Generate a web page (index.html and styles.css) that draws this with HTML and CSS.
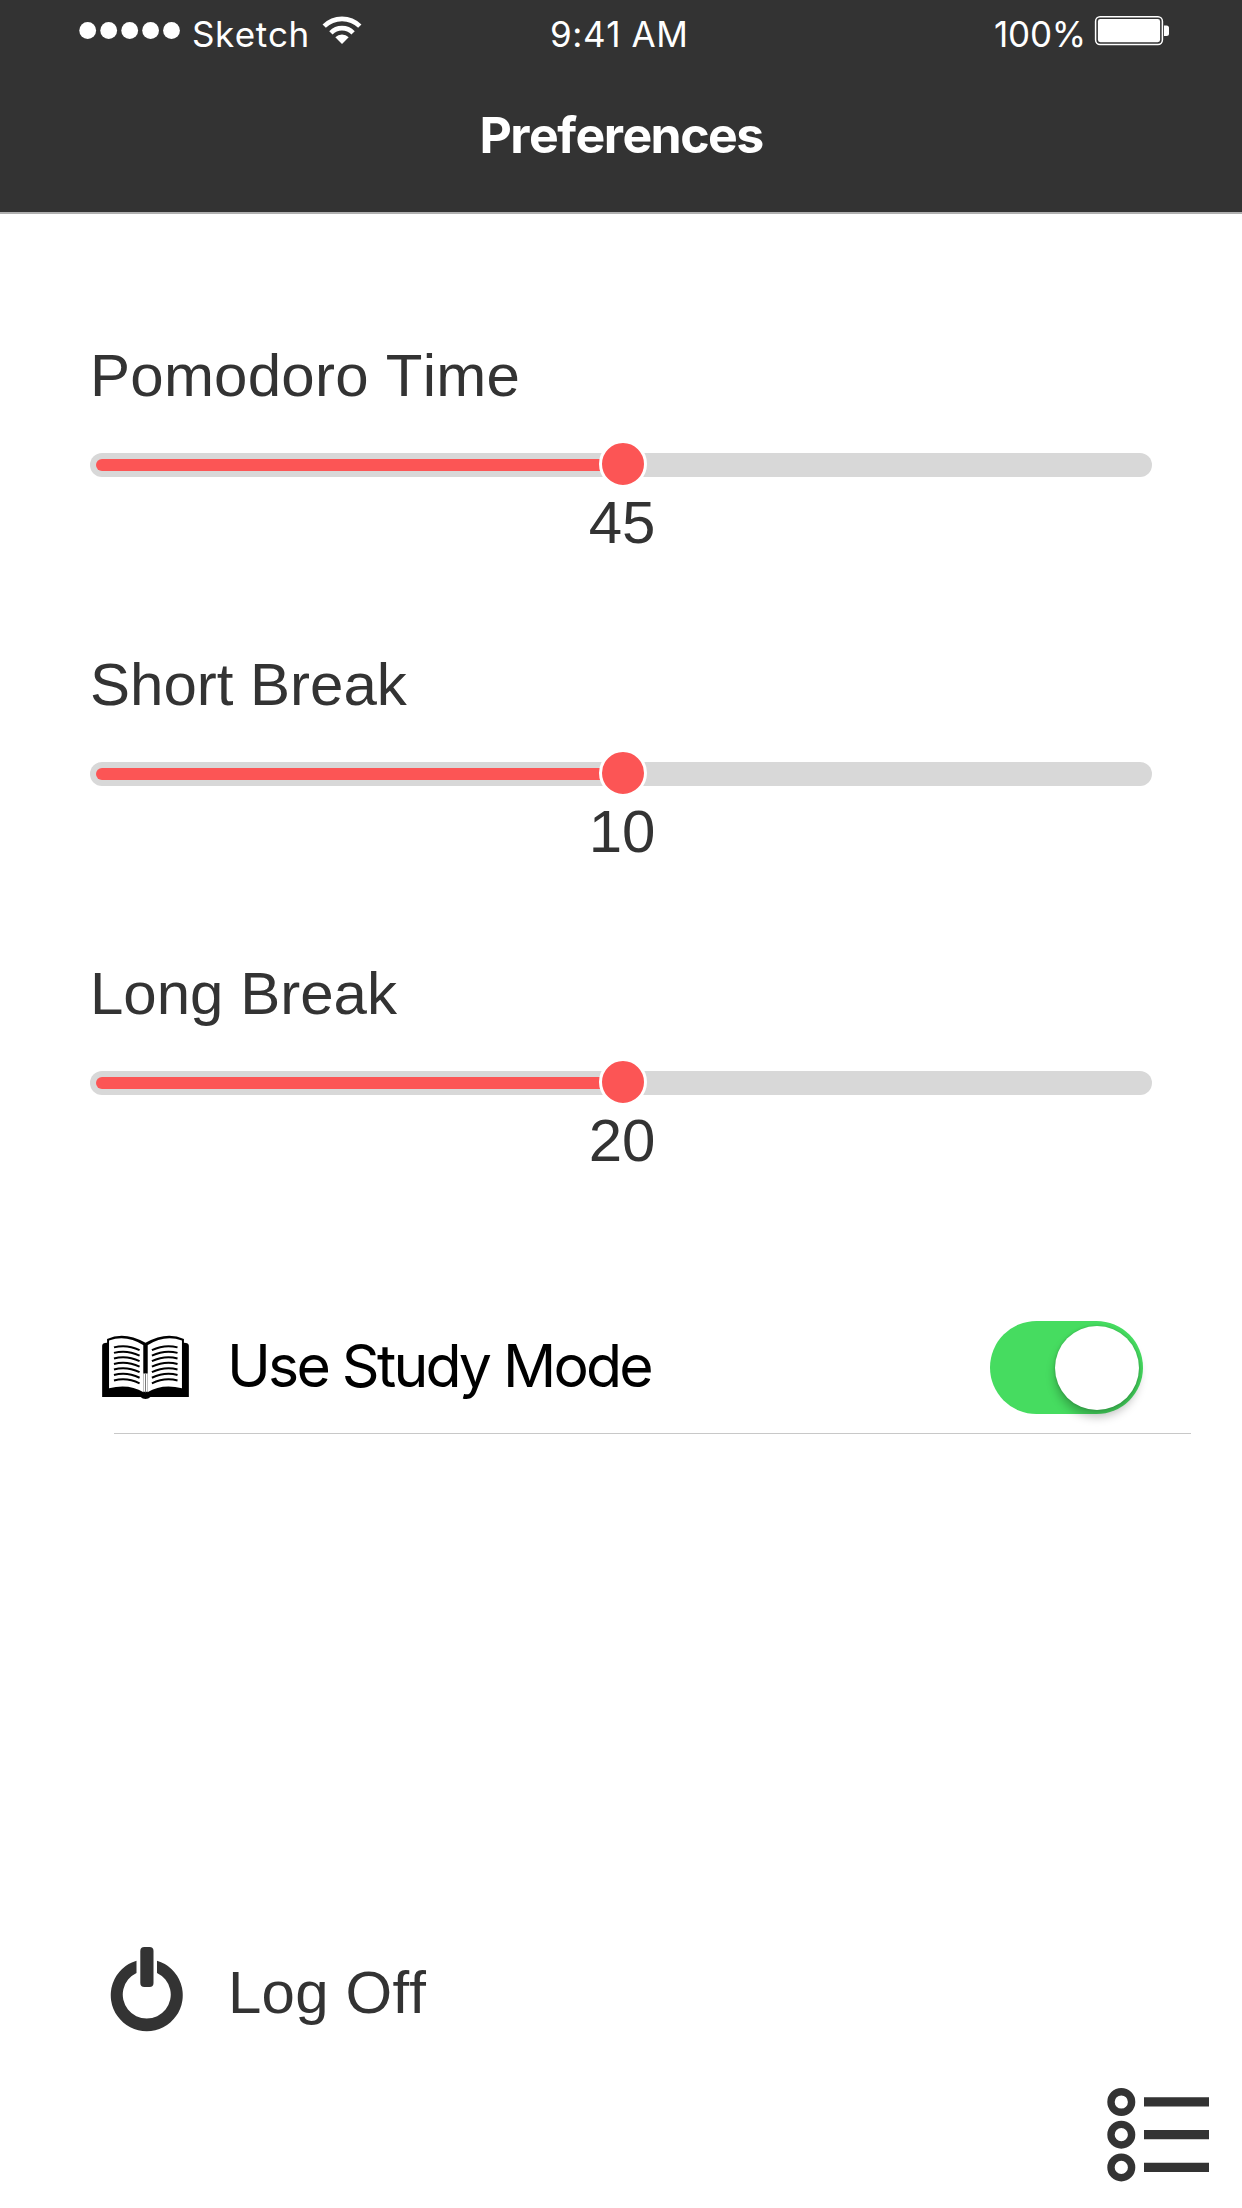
FILE: index.html
```html
<!DOCTYPE html>
<html lang="en">
<head>
<meta charset="utf-8">
<title>Preferences</title>
<link rel="stylesheet" href="styles.css">
</head>
<body>
<header class="header">
  <div class="status">
    <div class="carrier">
      <svg class="signal" width="94" height="20" viewBox="0 0 94 20" fill="#fff"><circle cx="8.7" cy="10.5" r="8.4"/><circle cx="29.7" cy="10.5" r="8.4"/><circle cx="50.7" cy="10.5" r="8.4"/><circle cx="71.6" cy="10.5" r="8.4"/><circle cx="92.5" cy="10.5" r="8.4"/></svg>
      <span class="carrier-name">Sketch</span>
      <svg class="wifi" width="40" height="28" viewBox="0 0 40 28"><g fill="none" stroke="#fff" stroke-width="4.7"><path d="M2.2 10.2a25.2 25.2 0 0 1 35.6 0"/><path d="M8.900 16.800a15.700 15.700 0 0 1 22.200 0"/></g><path d="M13.300 21.300a9.500 9.500 0 0 1 13.400 0L20 28z" fill="#fff"/></svg>
    </div>
    <time class="clock">9:41 AM</time>
    <div class="power">
      <span class="percent">100%</span>
      <svg class="battery" width="75" height="30" viewBox="0 0 75 30"><rect x=".6" y=".8" width="66.8" height="27.6" rx="4.4" fill="none" stroke="#fff" stroke-width="1.5"/><rect x="2.9" y="3" width="62.2" height="23.2" rx="2.4" fill="#fff"/><path d="M69 9.5h2.500a2.500 2.500 0 0 1 2.500 2.500v5.500a2.500 2.500 0 0 1-2.500 2.500H69z" fill="#fff"/></svg>
    </div>
  </div>
  <h1 class="title">Preferences</h1>
</header>
<main class="content">
  <section class="setting">
    <h2 class="label">Pomodoro Time</h2>
    <div class="track"><div class="fill"></div><div class="knob"></div></div>
    <div class="value">45</div>
  </section>
  <section class="setting">
    <h2 class="label label-break">Short Break</h2>
    <div class="track"><div class="fill"></div><div class="knob"></div></div>
    <div class="value">10</div>
  </section>
  <section class="setting">
    <h2 class="label label-break">Long Break</h2>
    <div class="track"><div class="fill"></div><div class="knob"></div></div>
    <div class="value">20</div>
  </section>
  <div class="row study">
    <svg class="book" width="87" height="67" viewBox="0 0 88 68">
      <path d="M0 12q0-3 5-3V5q18-8 39 4q21-12 39-4v4q5 0 5 3v52H49q-2 2-5 2t-5-2H0z"/>
      <path d="M7 6.500q18-6 35 5V59q-15-9-35-4zM81 6.500q-18-6-35 5V59q15-9 35-4z" fill="#fff"/>
      <path d="M42 10h4v30h-4z"/>
      <path d="M42 40h4v18l-2 1-2-1z" fill="#fff"/><path d="M44 40v19" stroke="#777" stroke-width="1"/>
      <g fill="none" stroke="#000" stroke-width="2"><path d="M12 13.600q13-3.400 26 2.800M12 19.200q13-3.400 26 2.800M12 24.800q13-3.400 26 2.800M12 30.400q13-3.400 26 2.800M12 36q13-3.400 26 2.800M12 41.600q13-3.400 26 2.800M12 47.200q13-3.400 26 2.800"/><path d="M76.500 13.600q-13-3.400-26 2.800M76.500 19.200q-13-3.400-26 2.800M76.500 24.800q-13-3.400-26 2.800M76.500 30.400q-13-3.400-26 2.800M76.500 36q-13-3.400-26 2.800M76.500 41.600q-13-3.400-26 2.800M76.500 47.200q-13-3.400-26 2.800"/></g>
    </svg>
    <span class="study-text">Use Study Mode</span>
    <div class="switch"><div class="switch-knob"></div></div>
  </div>
  <div class="divider"></div>
  <div class="row logoff">
    <svg class="power-icon" width="72" height="84" viewBox="0 0 72 84" fill="#333"><path d="M25.500 13.700A36 36 0 1 0 46 13.700V25.900A24 24 0 1 1 25.500 25.900z"/><rect x="29.300" y="0" width="13.200" height="40" rx="4"/></svg>
    <span class="logoff-text">Log Off</span>
  </div>
</main>
<footer class="footer">
  <svg width="103" height="94" viewBox="0 0 103 94"><g fill="none" stroke="#333" stroke-width="7.400"><circle cx="14.300" cy="14" r="10.300"/><circle cx="14.300" cy="46.700" r="10.300"/><circle cx="14.300" cy="79.400" r="10.300"/></g><path d="M37 9.200h65v9.300H37zM37 42h65v9.300H37zM37 74.800h65v9.300H37z" fill="#333"/></svg>
</footer>
</body>
</html>
```
FILE: styles.css
```css
* { box-sizing: border-box; }
body {
  margin: 0;
  width: 1242px;
  height: 2208px;
  overflow: hidden;
  display: flex;
  flex-direction: column;
  background: #fff;
  color: #333;
  font-family: "Liberation Sans", Arial, sans-serif;
  font-kerning: none;
}
svg { display: block; flex: none; overflow: visible; }
.header {
  height: 214px;
  flex: none;
  background: #333;
  border-bottom: 2px solid #b0b0b0;
  color: #fff;
  font-family: Inter, sans-serif;
}
.status {
  height: 60px;
  display: grid;
  grid-template-columns: 471px 1fr auto;
  font-size: 35px;
  line-height: 60px;
  padding: 4px 72px 0 79px;
}
.carrier, .power { display: flex; align-items: flex-start; }
.signal { margin-top: 16px; }
.carrier-name { margin-left: 19px; letter-spacing: .6px; }
.wifi { margin: 12px 0 0 12px; }
.clock { padding-left: 0; letter-spacing: .6px; }
.percent { letter-spacing: -.2px; }
.battery { margin: 12px 0 0 9px; }
.title {
  margin: 0;
  padding-top: 44px;
  font-size: 50px;
  line-height: 62px;
  font-weight: 700;
  letter-spacing: -1.6px;
  text-align: center;
}
.content { padding: 128px 90px 0; flex: 1; }
.setting { height: 309px; }
.label {
  margin: 0;
  height: 111px;
  font-size: 60px;
  line-height: 68px;
  font-weight: 400;
  letter-spacing: .25px;
}
.label-break { letter-spacing: 0; }
.track {
  position: relative;
  height: 24px;
  width: 1062px;
  border-radius: 12px;
  background: #d8d8d8;
  padding: 6px;
}
.fill { height: 12px; width: 520px; border-radius: 6px; background: #fc5555; }
.knob {
  position: absolute;
  left: 508.500px;
  top: -13.500px;
  width: 48px;
  height: 48px;
  border: 3px solid #fff;
  border-radius: 50%;
  background: #fc5555;
}
.value { margin-top: 12px; padding-left: 2px; text-align: center; font-size: 60px; line-height: 68px; }
.row { display: flex; align-items: flex-start; }
.study { height: 112px; margin-top: 52px; padding-left: 12px; }
.book { margin-top: 13px; }
.study-text {
  margin-left: 38px;
  color: #000;
  font-family: Inter, sans-serif;
  font-size: 59px;
  line-height: 90px;
  letter-spacing: -2.8px;
}
.switch {
  margin-left: auto;
  margin-right: 9px;
  width: 153px;
  height: 93px;
  border-radius: 47px;
  background: #46dc60;
  padding: 5px 4px;
}
.switch-knob {
  margin-left: auto;
  width: 84px;
  height: 84px;
  border-radius: 50%;
  background: #fff;
  box-shadow: 0 7px 10px rgba(0,0,0,.25), 0 0 3px rgba(0,0,0,.2);
}
.divider { height: 1px; margin: 0 -39px 0 24px; background: #c8c8c8; }
.logoff { margin-top: 513px; padding-left: 21px; }
.logoff-text { margin: 12px 0 0 45px; font-size: 60px; line-height: 68px; letter-spacing: .2px; }
.footer { height: 120px; display: flex; justify-content: flex-end; padding-right: 32px; }
```
